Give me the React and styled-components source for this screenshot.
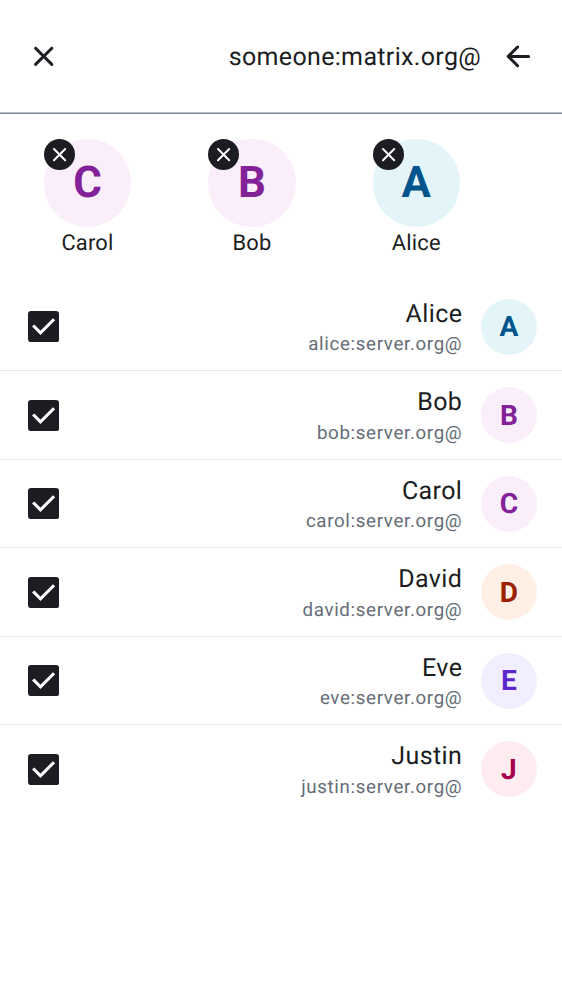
import React from "react";
import styled, { createGlobalStyle } from "styled-components";

const GlobalStyle = createGlobalStyle`
  * { box-sizing: border-box; }
  body {
    margin: 0;
    background: #fff;
    color: #1b1d22;
    font-family: Roboto, "Liberation Sans", sans-serif;
    text-rendering: geometricPrecision;
  }
`;

const Screen = styled.main`
  width: 562px;
  min-height: 1000px;
  background: #fff;
`;

const SearchBar = styled.header`
  display: flex;
  align-items: center;
  height: 114px;
  padding: 0 31.4px 1px 31px;
  border-bottom: 1px solid #818a95;
  box-shadow: inset 0 -1px 0 #bbc0c6;
`;

const Query = styled.div`
  flex: 1;
  padding: 3px 24.5px 0 0;
  text-align: right;
  font-size: 25px;
  line-height: 38px;
  letter-spacing: 0.34px;
`;

const IconButton = styled.button`
  display: flex;
  padding: 0;
  border: 0;
  background: none;
  color: #1b1d22;
`;

const SelectedList = styled.section`
  display: flex;
  gap: 77px;
  height: 168.6px;
  padding: 25.2px 0 0 43.8px;
`;

const SelectedUser = styled.div`
  position: relative;
  display: flex;
  flex-direction: column;
  align-items: center;
  width: 87.4px;
`;

const SelectedName = styled.div`
  padding-top: 1px;
  font-size: 21.86px;
  line-height: 32px;
  letter-spacing: 0.2px;
`;

const palette = {
  blue: ["#e3f5f9", "#00548c"],
  purple: ["#faeefb", "#822198"],
  orange: ["#ffefe4", "#9b2200"],
  violet: ["#f1efff", "#5d26cd"],
  pink: ["#ffecf0", "#a4004e"],
};

const Avatar = styled.div`
  display: flex;
  flex-shrink: 0;
  align-items: center;
  justify-content: center;
  width: ${(p) => (p.$large ? 87.4 : 56.2)}px;
  height: ${(p) => (p.$large ? 87.4 : 56.2)}px;
  padding-top: ${(p) => (p.$large ? 0 : 1)}px;
  border-radius: 50%;
  background: ${(p) => palette[p.$tone][0]};
  color: ${(p) => palette[p.$tone][1]};
  font-size: ${(p) => (p.$large ? 43.7 : 28.1)}px;
  font-weight: 700;
  line-height: 1;
`;

const RemoveBadge = styled.button`
  position: absolute;
  top: 0;
  left: 0;
  display: flex;
  padding: 0;
  border: 0;
  border-radius: 50%;
  background: #1b1d22;
  color: #fff;
`;

const UserRow = styled.div`
  display: flex;
  align-items: center;
  height: 88.55px;
  padding: 0.6px 25px 0 28px;
  border-bottom: 1px solid ${(p) => (p.$last ? "transparent" : "#e6e8ee")};
`;

const Details = styled.div`
  flex: 1;
  padding: 3.6px 18.5px 0 0;
  text-align: right;
`;

const Name = styled.div`
  font-size: 25px;
  line-height: 32px;
  letter-spacing: 0.4px;
`;

const UserId = styled.div`
  margin-top: -0.6px;
  color: #656d77;
  font-size: 18.73px;
  line-height: 28px;
  letter-spacing: 0.66px;
`;

const selected = [
  ["Carol", "purple"],
  ["Bob", "purple"],
  ["Alice", "blue"],
];

const users = [
  ["Alice", "blue"],
  ["Bob", "purple"],
  ["Carol", "purple"],
  ["David", "orange"],
  ["Eve", "violet"],
  ["Justin", "pink"],
];

const Close = () => (
  <svg width="25" height="25" viewBox="0 0 25 25" fill="none" stroke="currentColor" strokeWidth="3" strokeLinecap="round">
    <path d="M4.6 4.2L20.8 20.4M20.8 4.2L4.6 20.4" />
  </svg>
);

const Back = () => (
  <svg width="25" height="25" viewBox="0 0 25 25" fill="none" stroke="currentColor" strokeWidth="3" strokeLinecap="round" strokeLinejoin="round">
    <path d="M22.6 12.4H2.6M11.6 3L2.2 12.4L11.6 21.8" />
  </svg>
);

const Remove = () => (
  <svg width="31.2" height="31.2" viewBox="0 0 31.2 31.2" fill="none" stroke="currentColor" strokeWidth="2" strokeLinecap="round">
    <path d="M10 10L21.2 21.2M21.2 10L10 21.2" />
  </svg>
);

const Checkbox = () => (
  <svg width="31.2" height="31.2" viewBox="0 0 20 20" role="checkbox" aria-checked="true">
    <rect width="20" height="20" rx="2" fill="#1b1d22" />
    <path d="M4 10L8 14L16 6" fill="none" stroke="#fff" strokeWidth="2" strokeLinecap="square" />
  </svg>
);

export default function App() {
  return (
    <Screen>
      <GlobalStyle />
      <SearchBar>
        <IconButton aria-label="Clear"><Close /></IconButton>
        <Query>someone:matrix.org@</Query>
        <IconButton aria-label="Back"><Back /></IconButton>
      </SearchBar>
      <SelectedList>
        {selected.map(([name, tone]) => (
          <SelectedUser key={name}>
            <Avatar $large $tone={tone}>{name[0]}</Avatar>
            <SelectedName>{name}</SelectedName>
            <RemoveBadge aria-label="Remove"><Remove /></RemoveBadge>
          </SelectedUser>
        ))}
      </SelectedList>
      {users.map(([name, tone], i) => (
        <UserRow key={name} $last={i === users.length - 1}>
          <Checkbox />
          <Details>
            <Name>{name}</Name>
            <UserId>{name.toLowerCase()}:server.org@</UserId>
          </Details>
          <Avatar $tone={tone}>{name[0]}</Avatar>
        </UserRow>
      ))}
    </Screen>
  );
}
